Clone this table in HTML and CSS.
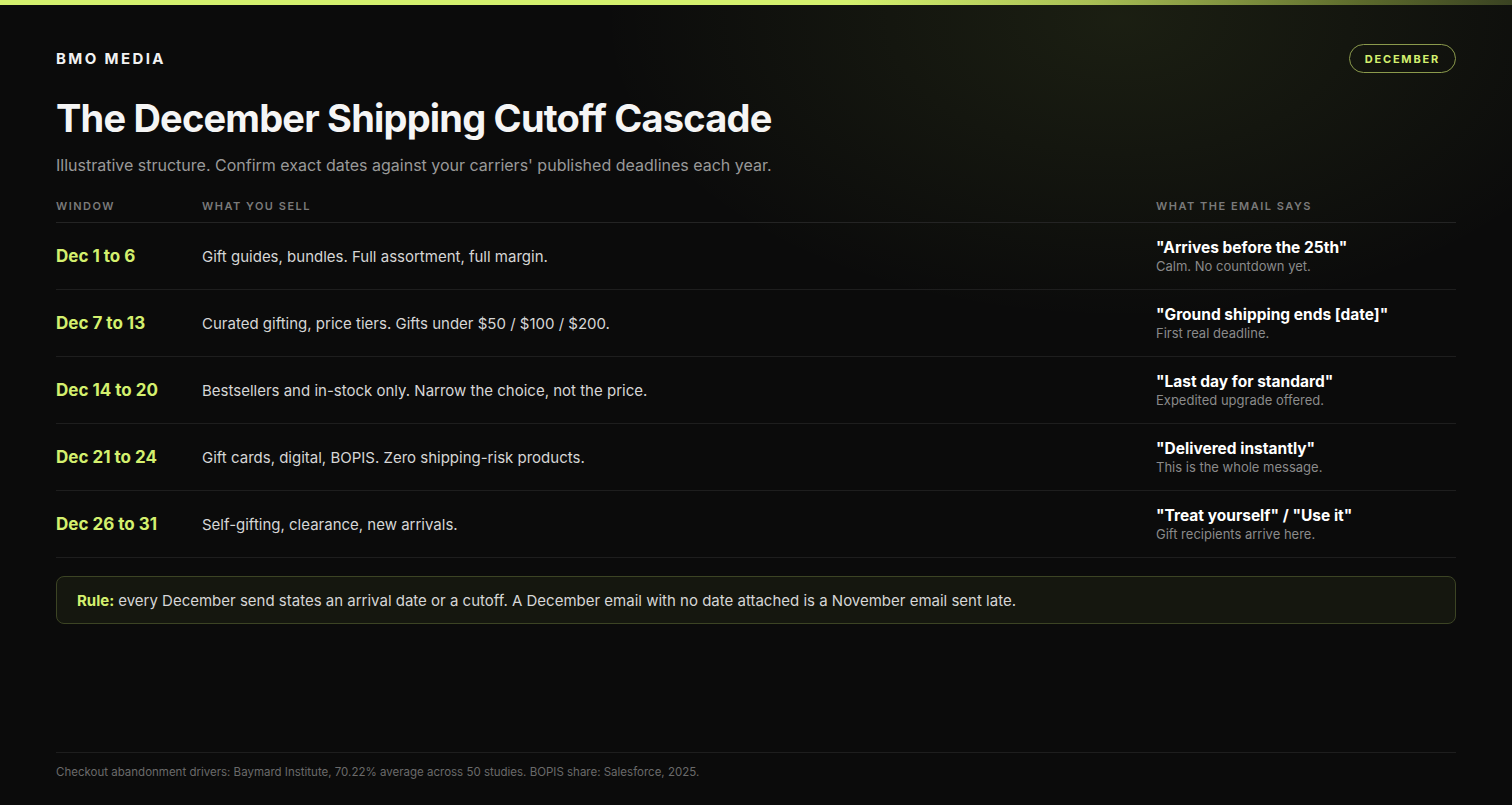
FILE: index.html
```html
<!DOCTYPE html>
<html lang="en">
<head>
<meta charset="utf-8">
<title>The December Shipping Cutoff Cascade</title>
<link rel="stylesheet" href="styles.css">
</head>
<body>
<div class="topbar"></div>
<main class="page">
  <header class="head">
    <div class="brand">BMO MEDIA</div>
    <div class="pill">DECEMBER</div>
  </header>
  <h1 class="title">The December Shipping Cutoff Cascade</h1>
  <p class="subtitle">Illustrative structure. Confirm exact dates against your carriers' published deadlines each year.</p>

  <section class="table">
    <div class="row thead">
      <div>WINDOW</div>
      <div>WHAT YOU SELL</div>
      <div>WHAT THE EMAIL SAYS</div>
    </div>
    <div class="row">
      <div class="date">Dec 1 to 6</div>
      <div class="sell">Gift guides, bundles. Full assortment, full margin.</div>
      <div class="email"><div class="quote">"Arrives before the 25th"</div><div class="note">Calm. No countdown yet.</div></div>
    </div>
    <div class="row">
      <div class="date">Dec 7 to 13</div>
      <div class="sell">Curated gifting, price tiers. Gifts under $50 / $100 / $200.</div>
      <div class="email"><div class="quote">"Ground shipping ends [date]"</div><div class="note">First real deadline.</div></div>
    </div>
    <div class="row">
      <div class="date">Dec 14 to 20</div>
      <div class="sell">Bestsellers and in-stock only. Narrow the choice, not the price.</div>
      <div class="email"><div class="quote">"Last day for standard"</div><div class="note">Expedited upgrade offered.</div></div>
    </div>
    <div class="row">
      <div class="date">Dec 21 to 24</div>
      <div class="sell">Gift cards, digital, BOPIS. Zero shipping-risk products.</div>
      <div class="email"><div class="quote">"Delivered instantly"</div><div class="note">This is the whole message.</div></div>
    </div>
    <div class="row">
      <div class="date">Dec 26 to 31</div>
      <div class="sell">Self-gifting, clearance, new arrivals.</div>
      <div class="email"><div class="quote">"Treat yourself" / "Use it"</div><div class="note">Gift recipients arrive here.</div></div>
    </div>
  </section>

  <div class="rule"><strong>Rule:</strong> every December send states an arrival date or a cutoff. A December email with no date attached is a November email sent late.</div>

  <footer class="foot">Checkout abandonment drivers: Baymard Institute, 70.22% average across 50 studies. BOPIS share: Salesforce, 2025.</footer>
</main>
</body>
</html>
```

FILE: styles.css
```css
* { box-sizing: border-box; }
html, body { margin: 0; padding: 0; }
body {
  background-color: #0b0b0b;
  background-image: radial-gradient(ellipse 520px 300px at 1120px 20px, rgba(190, 230, 90, 0.09), rgba(190, 230, 90, 0) 100%);
  background-repeat: no-repeat;
  color: #fff;
  font-family: Inter, "Noto Sans", sans-serif;
  min-height: 805px;
  display: flex;
  flex-direction: column;
}
.topbar {
  height: 5px;
  background: linear-gradient(90deg, #d4f06e 0%, #d4f06e 56%, #a9bf55 72%, #5c6a2c 90%, #3a4222 100%);
}
.page {
  flex: 1;
  display: flex;
  flex-direction: column;
  padding: 0 56px;
}
.head {
  display: flex;
  justify-content: space-between;
  align-items: center;
  margin-top: 39px;
}
.brand {
  font-size: 15px;
  font-weight: 700;
  letter-spacing: 2.4px;
  color: #f2f2f2;
}
.pill {
  height: 29px;
  padding: 0 15px;
  border: 1px solid #8b9a4c;
  border-radius: 15px;
  display: flex;
  align-items: center;
  font-size: 11px;
  font-weight: 700;
  letter-spacing: 1.8px;
  color: #d4f06e;
}
.title {
  margin: 21px 0 0;
  font-size: 38px;
  font-weight: 700;
  letter-spacing: -0.8px;
  line-height: 48px;
  color: #f5f5f5;
}
.subtitle {
  margin: 11px 0 0;
  font-size: 16px;
  line-height: 24px;
  color: #999;
}
.table {
  margin-top: 17px;
}
.row {
  display: grid;
  grid-template-columns: 146px 1fr 300px;
  align-items: center;
  height: 67px;
  border-bottom: 1px solid #1e1e1e;
}
.row.thead {
  height: 29px;
  align-items: start;
  padding-top: 5px;
  font-size: 11px;
  font-weight: 600;
  letter-spacing: 1.5px;
  color: #7a7a7a;
  border-bottom: 1px solid #242424;
}
.date {
  font-size: 17px;
  font-weight: 700;
  color: #d4f06e;
}
.sell {
  font-size: 15px;
  color: #d6d6d6;
}
.quote {
  font-size: 15.5px;
  font-weight: 700;
  color: #fff;
  line-height: 19px;
}
.note {
  font-size: 13px;
  color: #8a8a8a;
  line-height: 18px;
}
.rule {
  margin-top: 18px;
  height: 48px;
  display: flex;
  align-items: center;
  padding: 0 20px;
  border: 1px solid #3c4424;
  border-radius: 8px;
  background: #15170f;
  font-size: 15px;
  color: #d6d6d6;
}
.rule strong {
  color: #d4f06e;
  font-weight: 700;
  margin-right: 4px;
}
.foot {
  margin-top: auto;
  border-top: 1px solid #1e1e1e;
  padding: 12px 0 26px;
  font-size: 11.5px;
  color: #6a6a6a;
}
```
